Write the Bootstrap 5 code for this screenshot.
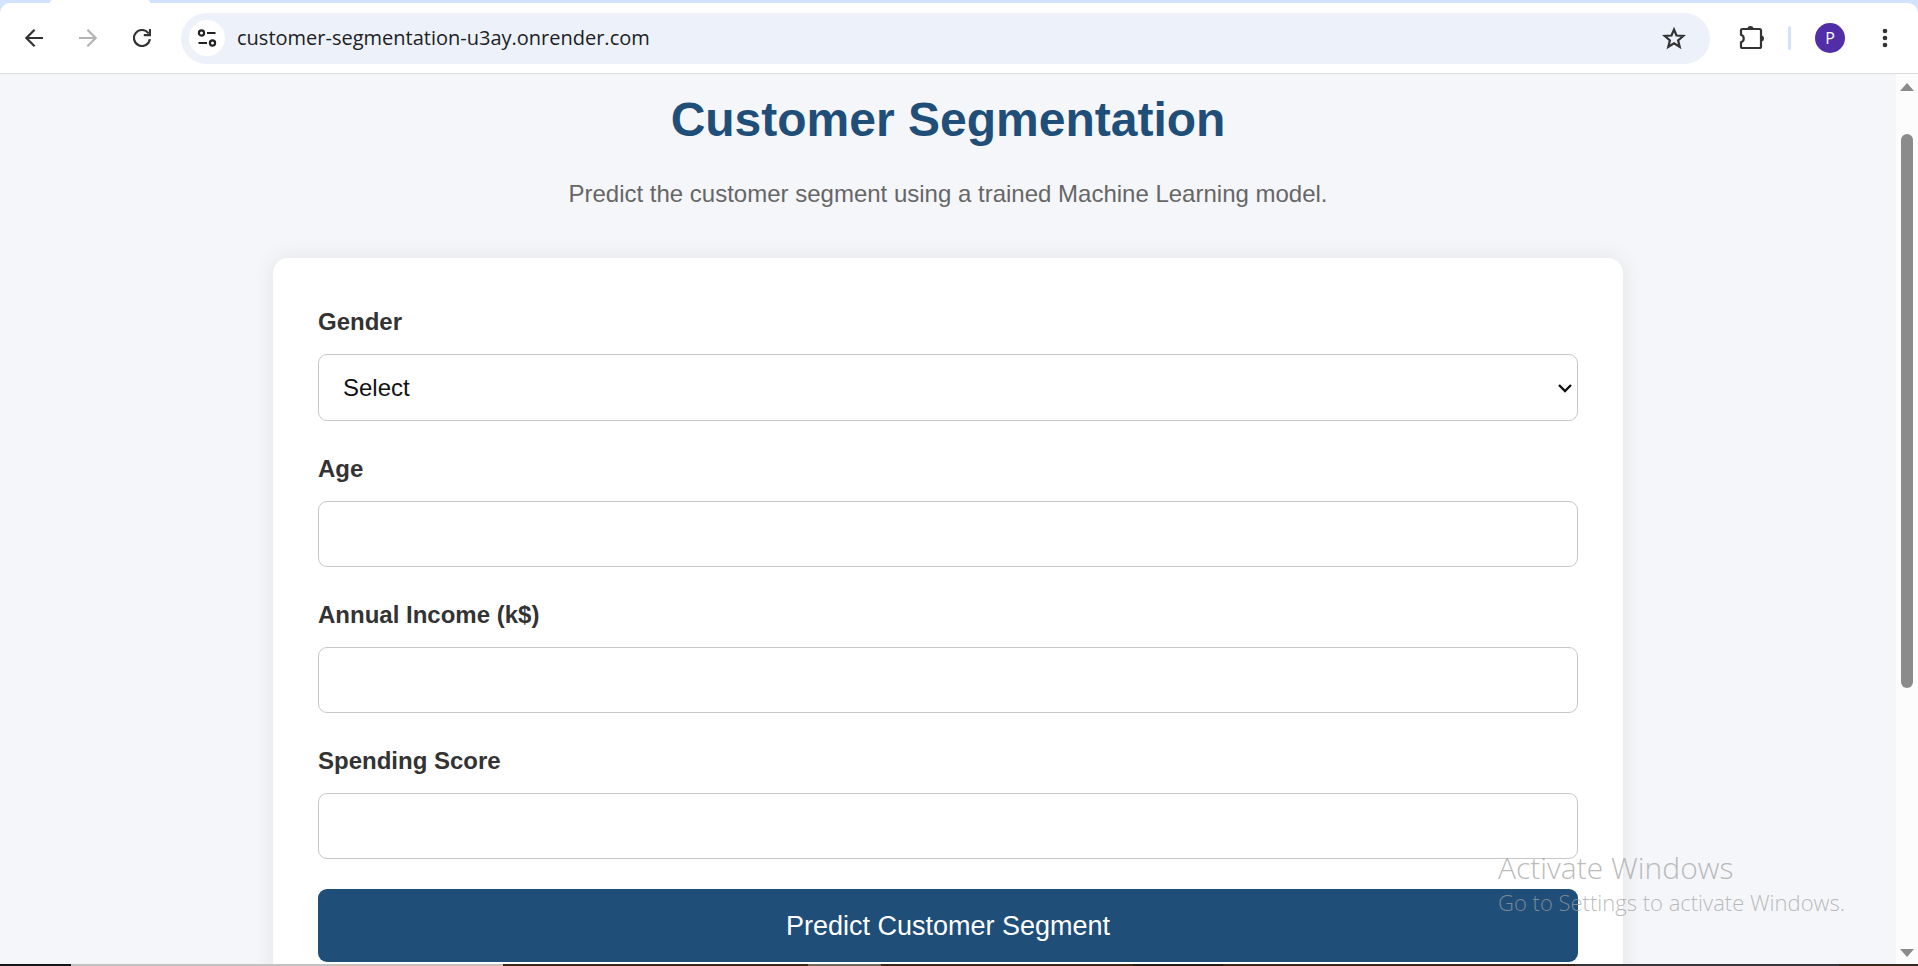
<!DOCTYPE html>
<html lang="en">
<head>
<meta charset="utf-8">
<meta name="viewport" content="width=device-width, initial-scale=1">
<title>Customer Segmentation</title>
<link href="https://cdn.jsdelivr.net/npm/bootstrap@5.3.0/dist/css/bootstrap.min.css" rel="stylesheet">
<style>
  body { font-family: "Liberation Sans", Arial, sans-serif; font-size: 24px; line-height: 36px; background: #f4f6fa; color: #333; }
  .ui-font { font-family: "Open Sans", "Noto Sans", sans-serif; }

  /* browser chrome */
  .tab-strip { height: 3px; background: #d3e3fd; padding-left: 50px; }
  .tab-foot { width: 100px; height: 3px; background: #fff; border-radius: 3px 3px 0 0; }
  .strip-back { background: #d3e3fd; }
  .toolbar { height: 71px; padding: 0 15px 0 16px; background: #fff; border-bottom: 1px solid #dcdcdc; border-radius: 10px 10px 0 0; }
  .tool-btn { width: 36px; height: 36px; padding: 0; border: 0; background: transparent; color: #333; flex: none; display: flex; align-items: center; justify-content: center; border-radius: 50%; }
  .tool-btn:disabled { color: #b4b4b4; }
  .nav-group { gap: 18px; margin-right: 21px; }
  .omnibox { height: 51px; border-radius: 26px; background: #ecf1fa; padding: 0 18px 0 8px; }
  .site-btn { background: #fff; }
  .url-input { border: 0; outline: 0; background: transparent; color: #202124; font-size: 20px; line-height: 30px; padding: 0; margin-left: 12px; min-width: 0; }
  .tool-rule { width: 3px; height: 24px; border-radius: 2px; background: #d3e3fd; margin-left: 18px; }
  .avatar { width: 30px; height: 30px; background: #512da8; color: #fff; font-size: 16px; line-height: 30px; }
  .menu-btn { margin-left: 22px; }

  /* page */
  .page-scroll { min-height: 0; }
  .page-view { overflow: hidden; padding-top: 17px; }
  .page-title { font-size: 48px; line-height: 58px; font-weight: 700; color: #1f4e79; margin-bottom: 27px; }
  .page-lead { color: #666; margin-bottom: 46px; }
  .form-panel { max-width: 1350px; background: #fff; border-radius: 15px; padding: 46px 45px; box-shadow: 0 0 22px rgba(0, 0, 0, .08); }
  .form-panel .form-label { font-weight: 700; line-height: 36px; margin-bottom: 14px; display: block; }
  .field { margin-bottom: 30px; }
  .form-panel .form-control, .form-panel .form-select { height: 66px; border: 1px solid #c8c8c8; border-radius: 9px; font-size: 24px; line-height: 28px; padding: 18px 24px; color: #111; background-color: #fff; }
  .form-panel .form-select { height: 67px; background-size: 14px 14px; background-position: right 5px center;
    background-image: url("data:image/svg+xml,%3Csvg xmlns='http://www.w3.org/2000/svg' viewBox='0 0 14 14'%3E%3Cpath d='M1 4l6 6 6-6' fill='none' stroke='%23111' stroke-width='2.4'/%3E%3C/svg%3E"); }
  .btn-predict { height: 73px; background: #1f4e79; color: #fff; border: 0; border-radius: 9px; font-size: 27px; line-height: 36px; }
  .btn-predict:hover { background: #17406a; color: #fff; }

  .scroll-track { width: 22px; flex: none; background: #fcfcfc; padding: 9px 0 7px; }
  .scroll-run { width: 12px; padding-top: 43px; }
  .scroll-thumb { height: 68%; background: #8b8b8b; border-radius: 6px; }

  /* desktop edge below the window */
  .desk-edge { height: 2px; background: #35281f; }

  .watermark { position: absolute; right: 77px; bottom: 48px; width: 343px; color: rgba(160, 160, 160, .72); pointer-events: none; white-space: nowrap; font-weight: 300; }
  .watermark-title { font-size: 30px; line-height: 36px; }
  .watermark-text { font-size: 22px; line-height: 32px; }
</style>
</head>
<body class="vh-100 d-flex flex-column overflow-hidden position-relative">
  <header class="strip-back ui-font flex-shrink-0">
    <div class="tab-strip"><div class="tab-foot"></div></div>
    <div class="toolbar d-flex align-items-center">
      <div class="nav-group d-flex">
        <button class="tool-btn" type="button" aria-label="Back">
          <svg width="18" height="18" viewBox="0 0 18 18" fill="none" stroke="currentColor" stroke-width="2.2"><path d="M18 9H1.8M9.6.8L1.4 9l8.200 8.200"/></svg>
        </button>
        <button class="tool-btn" type="button" aria-label="Forward" disabled>
          <svg width="18" height="18" viewBox="0 0 18 18" fill="none" stroke="currentColor" stroke-width="2.2"><path d="M0 9h16.200M8.400.8L16.600 9l-8.200 8.200"/></svg>
        </button>
        <button class="tool-btn" type="button" aria-label="Reload">
          <svg width="18" height="18" viewBox="0 0 18 18" fill="none" stroke="currentColor" stroke-width="2.2"><path d="M16.900 10.200A8 8 0 1 1 15.600 4.500M17 0v6.200h-6.200"/></svg>
        </button>
      </div>
      <div class="omnibox d-flex align-items-center flex-grow-1">
        <button class="tool-btn site-btn" type="button" aria-label="View site information">
          <svg width="20" height="18" viewBox="0 0 20 18" fill="none" stroke="#222" stroke-width="2.200"><circle cx="4.500" cy="4" r="2.600"/><path d="M10 4h8.500M1.500 14H10"/><circle cx="15.500" cy="14" r="2.600"/></svg>
        </button>
        <input class="url-input flex-grow-1" type="text" aria-label="Address" value="customer-segmentation-u3ay.onrender.com">
        <button class="tool-btn" type="button" aria-label="Bookmark this page">
          <svg width="24" height="24" viewBox="0 0 24 24" fill="none" stroke="currentColor" stroke-width="2.2"><path d="M12 3.500l2.500 6 6.700.5-5.100 4.300 1.600 6.500L12 17.300l-5.700 3.500 1.600-6.500L2.800 10l6.700-.5z"/></svg>
        </button>
      </div>
      <div class="d-flex align-items-center ms-4">
        <button class="tool-btn" type="button" aria-label="Extensions">
          <svg width="26" height="26" viewBox="0 0 26 26"><path d="M3.500 4h17a1.500 1.500 0 0 1 1.500 1.500v16a1.500 1.500 0 0 1-1.500 1.500h-17A1.500 1.500 0 0 1 2 21.500v-4.200a4 4 0 0 0 0-7.600V5.500A1.500 1.500 0 0 1 3.500 4z" fill="none" stroke="#333" stroke-width="2.200"/><path d="M8.500 4a3 3 0 0 1 6 0zM22 10.500a3 3 0 0 1 0 6z" fill="#333"/></svg>
        </button>
        <span class="tool-rule"></span>
        <span class="avatar rounded-circle text-center ms-4">P</span>
        <button class="tool-btn menu-btn" type="button" aria-label="Menu">
          <svg width="6" height="20" viewBox="0 0 6 20" fill="#333"><circle cx="3" cy="3" r="2.300"/><circle cx="3" cy="10" r="2.300"/><circle cx="3" cy="17" r="2.300"/></svg>
        </button>
      </div>
    </div>
  </header>

  <div class="page-scroll d-flex flex-grow-1">
    <main class="page-view flex-grow-1">
      <h1 class="page-title text-center">Customer Segmentation</h1>
      <p class="page-lead text-center">Predict the customer segment using a trained Machine Learning model.</p>
      <form class="form-panel mx-auto">
        <div class="field">
          <label class="form-label" for="gender">Gender</label>
          <select class="form-select" id="gender"><option>Select</option><option>Male</option><option>Female</option></select>
        </div>
        <div class="field">
          <label class="form-label" for="age">Age</label>
          <input class="form-control" type="number" id="age">
        </div>
        <div class="field">
          <label class="form-label" for="income">Annual Income (k$)</label>
          <input class="form-control" type="number" id="income">
        </div>
        <div class="field">
          <label class="form-label" for="score">Spending Score</label>
          <input class="form-control" type="number" id="score">
        </div>
        <button class="btn btn-predict w-100" type="button">Predict Customer Segment</button>
      </form>
    </main>
    <div class="scroll-track d-flex flex-column align-items-center" aria-hidden="true">
      <svg width="14" height="8" viewBox="0 0 14 8"><path d="M0 8l7-8 7 8z" fill="#8b8b8b"/></svg>
      <div class="scroll-run flex-grow-1"><div class="scroll-thumb"></div></div>
      <svg width="14" height="8" viewBox="0 0 14 8"><path d="M0 0h14L7 8z" fill="#8b8b8b"/></svg>
    </div>
  </div>

  <svg class="desk-edge w-100 flex-shrink-0 d-block" viewBox="0 0 1918 2" preserveAspectRatio="none" aria-hidden="true">
    <path d="M0 0h71v2H0z" fill="#111316"/><path d="M71 0h432v2H71z" fill="#c2c2c2"/><path d="M808 0h73v2h-73z" fill="#6b6866"/><path d="M1133 0h90v2h-90z" fill="#1b201f"/><path d="M1575 0h264v2h-264z" fill="#37353a"/>
  </svg>

  <div class="watermark ui-font">
    <div class="watermark-title">Activate Windows</div>
    <div class="watermark-text">Go to Settings to activate Windows.</div>
  </div>
<script src="https://cdn.jsdelivr.net/npm/bootstrap@5.3.0/dist/js/bootstrap.bundle.min.js"></script>
</body>
</html>
